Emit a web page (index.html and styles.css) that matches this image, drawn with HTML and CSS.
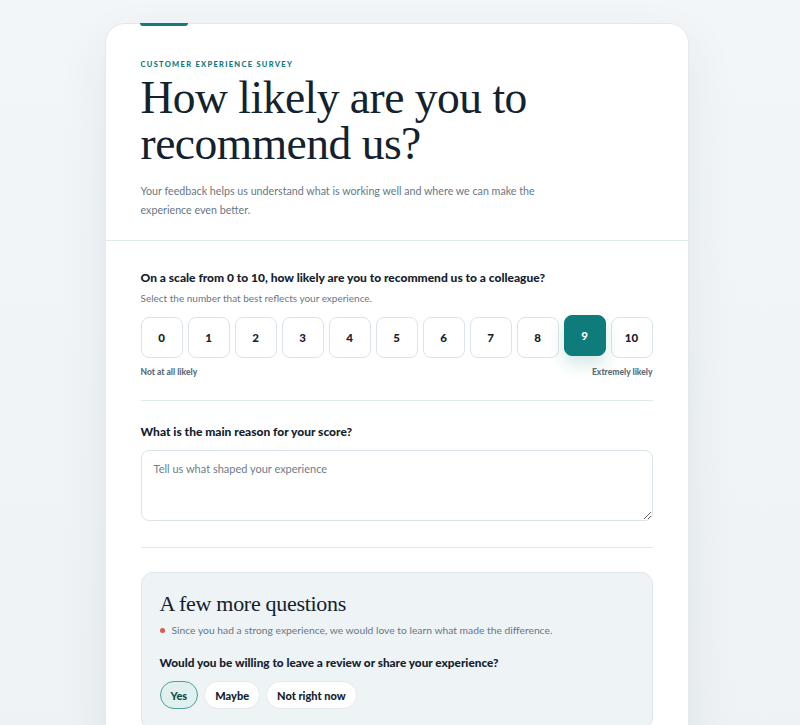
FILE: index.html
```html
<!DOCTYPE html>
<html lang="en">
<head>
<meta charset="utf-8">
<title>Customer Experience Survey</title>
<link rel="stylesheet" href="styles.css">
</head>
<body>
<main class="card">
  <span class="accent"></span>
  <header class="intro">
    <p class="eyebrow">CUSTOMER EXPERIENCE SURVEY</p>
    <h1 class="title">How likely are you to recommend us?</h1>
    <p class="lead">Your feedback helps us understand what is working well and where we can make the experience even better.</p>
  </header>
  <div class="body">
    <section class="block">
      <h2 class="question">On a scale from 0 to 10, how likely are you to recommend us to a colleague?</h2>
      <p class="hint">Select the number that best reflects your experience.</p>
      <div class="scale">
        <button class="score">0</button>
        <button class="score">1</button>
        <button class="score">2</button>
        <button class="score">3</button>
        <button class="score">4</button>
        <button class="score">5</button>
        <button class="score">6</button>
        <button class="score">7</button>
        <button class="score">8</button>
        <button class="score selected">9</button>
        <button class="score">10</button>
      </div>
      <div class="scale-labels">
        <span>Not at all likely</span>
        <span>Extremely likely</span>
      </div>
    </section>
    <section class="block block-reason">
      <h2 class="question">What is the main reason for your score?</h2>
      <textarea class="reason" placeholder="Tell us what shaped your experience"></textarea>
    </section>
    <section class="more">
      <h3 class="more-title">A few more questions</h3>
      <p class="note"><span class="dot"></span>Since you had a strong experience, we would love to learn what made the difference.</p>
      <h2 class="question q-review">Would you be willing to leave a review or share your experience?</h2>
      <div class="pills">
        <button class="pill active">Yes</button>
        <button class="pill">Maybe</button>
        <button class="pill">Not right now</button>
      </div>
    </section>
  </div>
</main>
</body>
</html>
```

FILE: styles.css
```css
* { box-sizing: border-box; }
html, body { margin: 0; padding: 0; }
body {
  background: linear-gradient(180deg, #f3f6f8 0%, #eef2f5 100%);
  min-height: 725px;
  padding: 23px 7px 40px 0;
  font-family: Lato, "Noto Sans", sans-serif;
  color: #14222d;
}
.card {
  position: relative;
  width: 584px;
  margin: 0 auto;
  background: #ffffff;
  border: 1px solid #e3e9ed;
  border-radius: 20px;
  box-shadow: 0 20px 50px rgba(30, 50, 70, 0.08);
}
.accent {
  position: absolute;
  top: -1px;
  left: 34px;
  width: 48px;
  height: 3px;
  background: #0f7b7a;
  border-radius: 0 0 3px 3px;
}
.intro {
  padding: 35px 35px 21px;
  border-bottom: 1px solid #e0eaec;
}
.eyebrow {
  margin: 0;
  font-size: 7.5px;
  font-weight: 900;
  letter-spacing: 1.3px;
  color: #0f7b7a;
  line-height: 12px;
}
.title {
  margin: 4px 0 0;
  font-family: "Liberation Serif", "DejaVu Serif", serif;
  font-weight: 400;
  font-size: 45.5px;
  line-height: 46px;
  letter-spacing: -0.5px;
  color: #13222d;
  max-width: 420px;
}
.lead {
  margin: 14px 0 0;
  font-size: 10.7px;
  line-height: 19px;
  color: #687883;
  max-width: 420px;
}
.body {
  padding: 0 35px 40px;
}
.block {
  padding: 29px 0 22px;
  border-bottom: 1px solid #e0eaec;
}
.block-reason {
  padding: 23px 0 26px;
}
.question {
  margin: 0;
  font-size: 12px;
  font-weight: 900;
  line-height: 16px;
  color: #14222d;
}
.hint {
  margin: 5px 0 0;
  font-size: 10px;
  line-height: 14px;
  color: #687883;
}
.scale {
  display: flex;
  gap: 5px;
  margin-top: 12px;
}
.score {
  flex: 1;
  height: 41px;
  border: 1px solid #dbe4e8;
  border-radius: 8px;
  background: #ffffff;
  font-family: inherit;
  font-size: 11.5px;
  font-weight: 900;
  color: #14222d;
  padding: 0;
}
.score.selected {
  background: #0e7c7b;
  border-color: #0e7c7b;
  color: #ffffff;
  transform: translateY(-2px);
  box-shadow: 0 8px 16px rgba(14, 124, 123, 0.18);
}
.scale-labels {
  display: flex;
  justify-content: space-between;
  margin-top: 8px;
  font-size: 8.5px;
  font-weight: 900;
  line-height: 12px;
  color: #5d6d78;
}
.reason {
  display: block;
  width: 100%;
  height: 71px;
  margin-top: 10px;
  padding: 11px 12px;
  border: 1px solid #dbe4e8;
  border-radius: 8px;
  font-family: inherit;
  font-size: 11px;
  color: #14222d;
  resize: vertical;
}
.reason::placeholder { color: #6e7d87; }
.more {
  margin-top: 24px;
  padding: 17px 18px 20px;
  background: #eef3f6;
  border: 1px solid #dde7ec;
  border-radius: 12px;
}
.more-title {
  margin: 0;
  font-family: "Liberation Serif", "DejaVu Serif", serif;
  font-weight: 400;
  font-size: 22px;
  line-height: 28px;
  letter-spacing: -0.3px;
  color: #13222d;
}
.note {
  display: flex;
  align-items: center;
  gap: 7px;
  margin: 4px 0 0;
  font-size: 10.3px;
  line-height: 16px;
  color: #687883;
}
.dot {
  width: 5px;
  height: 5px;
  border-radius: 50%;
  background: #e0574b;
  flex: none;
}
.q-review {
  margin-top: 17px;
  font-size: 11.8px;
}
.pills {
  display: flex;
  gap: 6px;
  margin-top: 10px;
}
.pill {
  height: 28px;
  padding: 0 10px;
  border: 1px solid #e3eaee;
  border-radius: 999px;
  background: #ffffff;
  font-family: inherit;
  font-size: 11px;
  font-weight: 900;
  color: #14222d;
}
.pill.active {
  background: #dff0ee;
  border-color: #4d9f9b;
  color: #0b4d4b;
}
```
